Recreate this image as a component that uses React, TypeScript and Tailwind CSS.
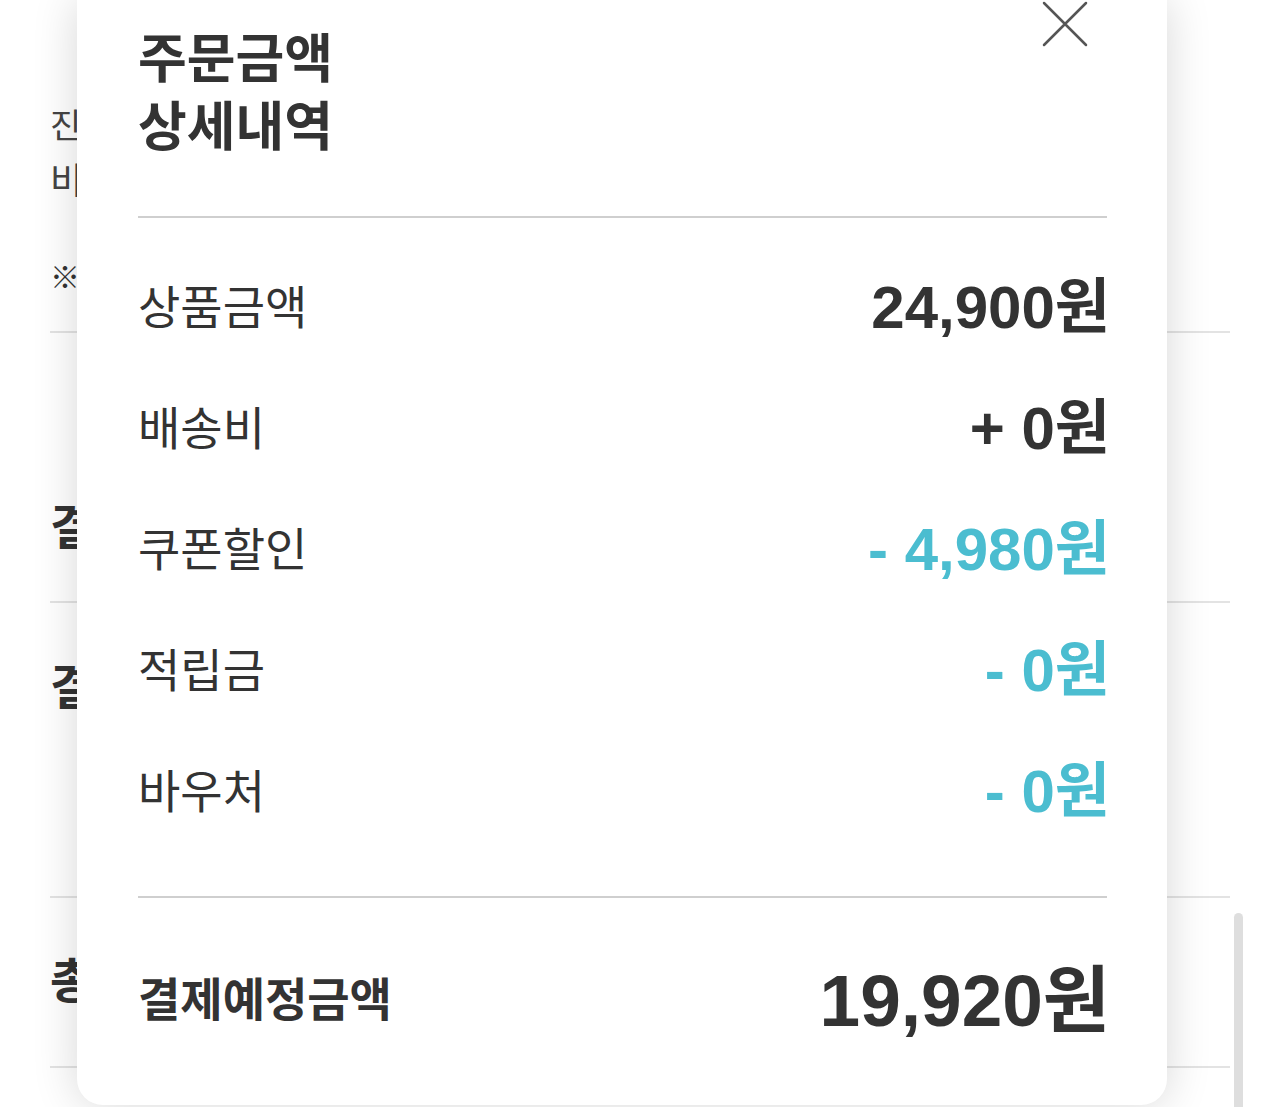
import React from 'react';

const rows = [
  { label: '상품금액', value: '24,900원', accent: false },
  { label: '배송비', value: '+ 0원', accent: false },
  { label: '쿠폰할인', value: '- 4,980원', accent: true },
  { label: '적립금', value: '- 0원', accent: true },
  { label: '바우처', value: '- 0원', accent: true },
];

const font = { fontFamily: '"Liberation Sans", "Noto Sans CJK KR", sans-serif' };

function Background() {
  return (
    <div className="px-[50px] text-[#333]">
      <div className="h-[331px] flex flex-col">
        <div className="pt-[98px] text-[34px] leading-[56px] text-[#444]">진행중인 주문 내역입니다</div>
        <div className="text-[36px] leading-[56px] text-[#444]">비회원 주문</div>
        <div className="mt-[48px] text-[30px] font-bold leading-[40px]">※ 안내사항</div>
      </div>
      <div className="h-[2px] bg-[#e3e3e3]" />
      <div className="h-[268px]">
        <div className="pt-[172px] text-[48px] font-bold leading-none">결제수단</div>
      </div>
      <div className="h-[2px] bg-[#e3e3e3]" />
      <div className="h-[293px]">
        <div className="pt-[62px] text-[48px] font-bold leading-none">결제정보</div>
      </div>
      <div className="h-[2px] bg-[#e3e3e3]" />
      <div className="h-[168px]">
        <div className="pt-[60px] text-[48px] font-bold leading-none">총 결제금액</div>
      </div>
      <div className="h-[2px] bg-[#e3e3e3]" />
      <div className="h-[40px]" />
    </div>
  );
}

export default function App() {
  return (
    <div className="relative w-[1280px] h-[1107px] overflow-hidden bg-white" style={font}>
      <Background />

      <div className="absolute left-[1234px] top-[913px] w-[9px] h-[220px] rounded-full bg-[#dedede]" />

      <div className="absolute left-[77px] top-0 w-[1090px] h-[1105px] bg-white rounded-b-[26px] shadow-[0_0_45px_rgba(0,0,0,0.16)] pl-[61px] pr-[57px] text-[#333]">
        <button className="absolute left-[965px] top-[1px]" aria-label="닫기">
          <svg width="46" height="46" viewBox="0 0 46 46">
            <path d="M2 2 L44 44 M44 2 L2 44" stroke="#555" strokeWidth="2.5" strokeLinecap="round" />
          </svg>
        </button>

        <h2 className="pt-[26px] text-[53px] font-bold leading-[68px]">
          주문금액
          <br />
          상세내역
        </h2>

        <div className="mt-[54px] mr-[3px] h-[2px] bg-[#cfcfcf]" />

        <div className="mt-[29px]">
          {rows.map((row, index) => (
            <div key={index} className="h-[121px] flex items-center justify-between">
              <span className="text-[46px] leading-none">{row.label}</span>
              <span className={`text-[60px] font-bold leading-none ${row.accent ? 'text-[#4bbdd0]' : 'text-[#333]'}`}>
                {row.value}
              </span>
            </div>
          ))}
        </div>

        <div className="mt-[44px] mr-[3px] h-[2px] bg-[#cfcfcf]" />

        <div className="mt-[42px] h-[120px] flex items-center justify-between">
          <span className="text-[46px] font-bold leading-none">결제예정금액</span>
          <span className="text-[73px] font-bold leading-none">19,920원</span>
        </div>
      </div>
    </div>
  );
}
